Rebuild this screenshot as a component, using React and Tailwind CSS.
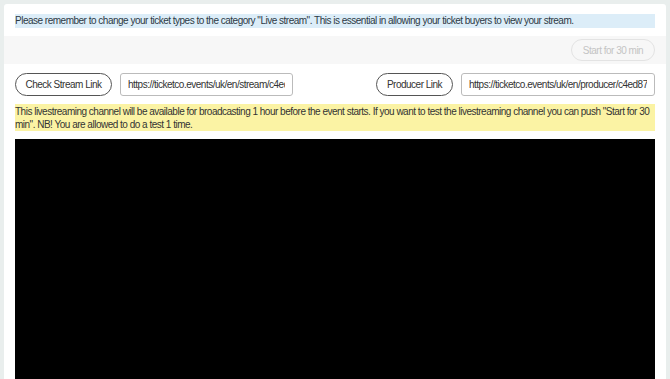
export default function App() {
  const streamUrl = "https://ticketco.events/uk/en/stream/c4ed87a1-live-channel";
  const producerUrl = "https://ticketco.events/uk/en/producer/c4ed87a1-live-channel";

  return (
    <div className="min-h-screen bg-[#e9eeed] pt-[4px] px-[4px] font-['Liberation_Sans',Arial,sans-serif] text-[10px] tracking-[-0.5px] text-[#333]">
      <div className="bg-white rounded-t-[3px] h-[375px] overflow-hidden">
        {/* Notice */}
        <div className="px-[11px] pt-[10px] pb-[8px]">
          <p className="bg-[#dcedf8] h-[14px] leading-[14px] text-[#2d3a45]">
            Please remember to change your ticket types to the category "Live stream". This is essential in allowing your ticket buyers to view your stream.
          </p>
        </div>

        {/* Toolbar */}
        <div className="bg-[#f7f7f7] h-[28px] flex items-center justify-end px-[11px]">
          <button className="h-[22px] w-[84px] rounded-full border border-[#e3e3e3] text-[#c4c4c4] bg-[#f7f7f7]">
            Start for 30 min
          </button>
        </div>

        {/* Links */}
        <div className="px-[11px] pt-[9px]">
          <div className="flex items-center justify-between h-[23px]">
            <div className="flex items-center gap-[8px]">
              <button className="h-[23px] w-[97px] rounded-full border border-[#555] text-[#333]">Check Stream Link</button>
              <input readOnly value={streamUrl} className="h-[23px] w-[173px] px-[7px] border border-[#bbb] rounded-[3px] text-[#333] outline-none" />
            </div>
            <div className="flex items-center gap-[8px]">
              <button className="h-[23px] w-[77px] rounded-full border border-[#555] text-[#333]">Producer Link</button>
              <input readOnly value={producerUrl} className="h-[23px] w-[194px] px-[7px] border border-[#bbb] rounded-[3px] text-[#333] outline-none" />
            </div>
          </div>

          <p className="mt-[8px] bg-[#fbf3a4] leading-[13px] py-[0.5px] text-[#333]">
            This livestreaming channel will be available for broadcasting 1 hour before the event starts. If you want to test the livestreaming channel you can push "Start for 30 min". NB! You are allowed to do a test 1 time.
          </p>

          {/* Video */}
          <div className="mt-[8px] h-[260px] bg-black"></div>
        </div>
      </div>
    </div>
  );
}
